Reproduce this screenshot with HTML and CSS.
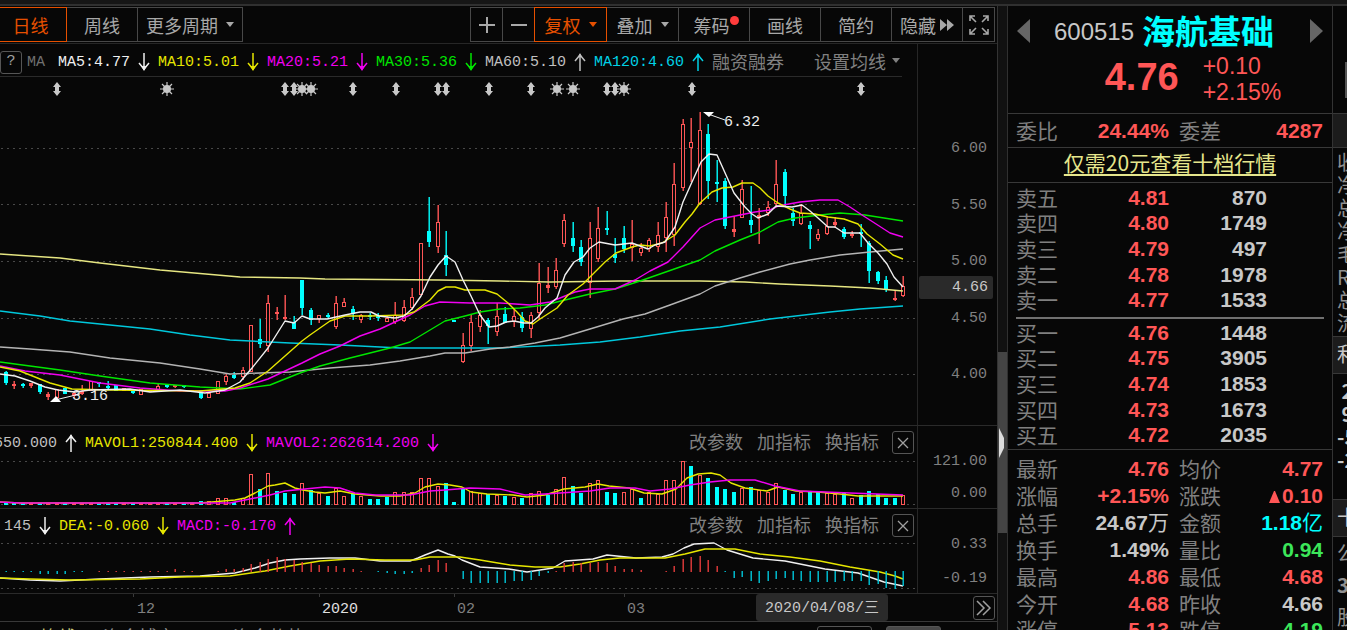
FILE: index.html
```html
<!DOCTYPE html>
<html lang="zh-CN">
<head>
<meta charset="utf-8">
<title>海航基础 600515</title>
<link rel="stylesheet" href="styles.css">
</head>
<body>
<svg class="defs" aria-hidden="true">
  <symbol id="down" viewBox="0 0 12 20"><path d="M6 1V18M1 11L6 17L11 11" fill="none" stroke="currentColor" stroke-width="1.5"/><path d="M3 14H9L6 19Z" fill="currentColor"/></symbol>
  <symbol id="up" viewBox="0 0 12 20"><path d="M6 19V2M1 9L6 3L11 9" fill="none" stroke="currentColor" stroke-width="1.5"/><path d="M4 5H8L6 1Z" fill="currentColor"/></symbol>
  <symbol id="caret" viewBox="0 0 8 5"><path d="M0 0H8L4 5Z" fill="currentColor"/></symbol>
  <symbol id="cross" viewBox="0 0 12 12"><path d="M1 1L11 11M11 1L1 11" stroke="currentColor" stroke-width="1.3"/></symbol>
</svg>
<div class="app">
  <div class="topstrip"></div>
  <main class="chart">
    <nav class="toolbar">
      <div class="group">
        <button class="btn day active">日线</button>
        <button class="btn">周线</button>
        <button class="btn wide">更多周期<svg class="caret"><use href="#caret"/></svg></button>
      </div>
      <div class="group">
        <button class="btn sign" aria-label="放大"><svg width="16" height="16"><path d="M0 8H16M8 0V16" stroke="currentColor" stroke-width="2"/></svg></button>
        <button class="btn sign" aria-label="缩小"><svg width="16" height="16"><path d="M0 8H16" stroke="currentColor" stroke-width="2"/></svg></button>
        <button class="btn drop active">复权<svg class="caret"><use href="#caret"/></svg></button>
        <button class="btn drop">叠加<svg class="caret"><use href="#caret"/></svg></button>
        <button class="btn">筹码<i class="dot"></i></button>
        <button class="btn">画线</button>
        <button class="btn">简约</button>
        <button class="btn tight">隐藏<svg width="14" height="12"><path d="M0 0L7 6L0 12ZM7 0L14 6L7 12Z" fill="currentColor"/></svg></button>
        <button class="btn sign" aria-label="全屏"><svg width="20" height="22" fill="none" stroke="currentColor" stroke-width="1.6"><path d="M1 7V2H6M1 2L7 8M14 2H19V7M19 2L13 8M1 15V20H6M1 20L7 14M14 20H19V15M19 20L13 14"/></svg></button>
      </div>
    </nav>

    <section class="pane price">
      <div class="plot">
        <div class="legend ruled">
          <button class="box" aria-label="帮助">?</button>
          <span class="dim name">MA</span>
          <span class="white">MA5:4.77</span><svg class="arrow white"><use href="#down"/></svg>
          <span class="yellow">MA10:5.01</span><svg class="arrow yellow"><use href="#down"/></svg>
          <span class="magenta">MA20:5.21</span><svg class="arrow magenta"><use href="#down"/></svg>
          <span class="green">MA30:5.36</span><svg class="arrow green"><use href="#down"/></svg>
          <span class="grey">MA60:5.10</span><svg class="arrow grey"><use href="#up"/></svg>
          <span class="cyan">MA120:4.60</span><svg class="arrow cyan"><use href="#up"/></svg>
          <button class="link">融资融券</button>
          <button class="link setting">设置均线<svg class="caret"><use href="#caret"/></svg></button>
        </div>
        <svg class="canvas" id="price" viewBox="0 77 917 348" preserveAspectRatio="xMaxYMid"></svg>
      </div>
      <div class="axis price-axis">
        <span>6.00</span><span>5.50</span><span>5.00</span><span>4.50</span><span>4.00</span>
        <b class="last">4.66</b>
      </div>
    </section>

    <section class="pane volume">
      <div class="plot">
        <div class="legend">
          <span class="grey cut">650.000</span><svg class="arrow white"><use href="#up"/></svg>
          <span class="yellow">MAVOL1:250844.400</span><svg class="arrow yellow"><use href="#down"/></svg>
          <span class="magenta">MAVOL2:262614.200</span><svg class="arrow magenta"><use href="#down"/></svg>
          <div class="tools"><button class="link">改参数</button><button class="link">加指标</button><button class="link">换指标</button><button class="box" aria-label="关闭"><svg width="12" height="12"><use href="#cross"/></svg></button></div>
        </div>
        <svg class="canvas" id="volume" viewBox="0 459 917 49" preserveAspectRatio="xMaxYMid"></svg>
      </div>
      <div class="axis sub-axis"><span>121.00</span><span>0.00</span></div>
    </section>

    <section class="pane macd">
      <div class="plot">
        <div class="legend">
          <span class="grey lead">145</span><svg class="arrow white"><use href="#down"/></svg>
          <span class="yellow">DEA:-0.060</span><svg class="arrow yellow"><use href="#down"/></svg>
          <span class="magenta">MACD:-0.170</span><svg class="arrow magenta"><use href="#up"/></svg>
          <div class="tools"><button class="link">改参数</button><button class="link">加指标</button><button class="link">换指标</button><button class="box" aria-label="关闭"><svg width="12" height="12"><use href="#cross"/></svg></button></div>
        </div>
        <svg class="canvas" id="macd" viewBox="0 542 917 51" preserveAspectRatio="xMaxYMid"></svg>
      </div>
      <div class="axis sub-axis"><span>0.33</span><span>-0.19</span></div>
    </section>

    <div class="dates">
      <svg class="canvas" viewBox="0 594 917 27" preserveAspectRatio="xMaxYMid">
        <path d="M133.5 593V597M319.5 593V597M454.5 593V597M624.5 593V597" stroke="#3a3a3a"/>
        <g class="date"><text x="137" y="613">12</text><text x="322" y="613" class="year">2020</text><text x="457" y="613">02</text><text x="627" y="613">03</text></g>
      </svg>
      <span class="cursor-date">2020/04/08/三</span>
      <button class="box more" aria-label="更多"><svg width="16" height="16" fill="none" stroke="currentColor" stroke-width="1.5"><path d="M1 1L8 8L1 15M7 1L14 8L7 15"/></svg></button>
    </div>

    <nav class="tabs">
      <button class="tab pale">云</button><button class="tab pale t2">均线</button><button class="tab t3">资金博弈</button><button class="tab t4">资金趋势</button><button class="tab pale t5">MACD</button><button class="tab t6">KDJ</button><button class="tab t7">RSI</button><button class="tab t8">BOLL</button><button class="tab t9">W&amp;R</button><button class="tab t10">OBV</button><button class="tab t11">BIAS</button><button class="tab framed">更多</button><button class="tab filled">模板</button>
    </nav>
  </main>

  <div class="splitter"><div class="thumb"><svg width="7" height="30"><path d="M1 0L6 10V20L1 30Z" fill="#ddd"/></svg></div></div>

  <aside class="quote">
    <header>
      <div class="title">
        <button class="step" aria-label="上一只"><svg width="13" height="24"><path d="M13 0V24L0 12Z" fill="#666"/></svg></button>
        <div class="stock"><span class="code">600515</span><h1>海航基础</h1></div>
        <button class="step" aria-label="下一只"><svg width="13" height="24"><path d="M0 0V24L13 12Z" fill="#666"/></svg></button>
      </div>
      <div class="now red"><strong>4.76</strong><div class="chg"><span>+0.10</span><span>+2.15%</span></div></div>
    </header>
    <table class="stats ratio"><tr><th>委比</th><td class="red">24.44%</td><th>委差</th><td class="red">4287</td></tr></table>
    <div class="promo"><a href="#">仅需20元查看十档行情</a></div>
    <div class="book">
      <table>
        <tr><th>卖五</th><td>4.81</td><td>870</td></tr>
        <tr><th>卖四</th><td>4.80</td><td>1749</td></tr>
        <tr><th>卖三</th><td>4.79</td><td>497</td></tr>
        <tr><th>卖二</th><td>4.78</td><td>1978</td></tr>
        <tr><th>卖一</th><td>4.77</td><td>1533</td></tr>
      </table>
      <hr>
      <table>
        <tr><th>买一</th><td>4.76</td><td>1448</td></tr>
        <tr><th>买二</th><td>4.75</td><td>3905</td></tr>
        <tr><th>买三</th><td>4.74</td><td>1853</td></tr>
        <tr><th>买四</th><td>4.73</td><td>1673</td></tr>
        <tr><th>买五</th><td>4.72</td><td>2035</td></tr>
      </table>
    </div>
    <table class="stats detail">
      <tr><th>最新</th><td class="red">4.76</td><th>均价</th><td class="red">4.77</td></tr>
      <tr><th>涨幅</th><td class="red">+2.15%</td><th>涨跌</th><td class="red"><svg width="11" height="12"><path d="M5 0H6L11 12H0Z" fill="currentColor"/></svg> 0.10</td></tr>
      <tr><th>总手</th><td>24.67<small>万</small></td><th>金额</th><td class="aqua">1.18<small>亿</small></td></tr>
      <tr><th>换手</th><td>1.49%</td><th>量比</th><td class="lime">0.94</td></tr>
      <tr><th>最高</th><td class="red">4.86</td><th>最低</th><td class="red">4.68</td></tr>
      <tr><th>今开</th><td class="red">4.68</td><th>昨收</th><td>4.66</td></tr>
      <tr><th>涨停</th><td class="red">5.13</td><th>跌停</th><td class="lime">4.19</td></tr>
    </table>
  </aside>

  <aside class="edge">
    <div class="edge-top"><i></i></div>
    <div class="edge-head first"></div>
    <div class="edge-list"><span>收</span><span>净</span><span>总</span><span>净</span><span>毛</span><span>R</span><span>总</span><span>流</span></div>
    <div class="edge-head">利</div>
    <div class="edge-nums"><span>&nbsp;2</span><span>&nbsp;9</span><span>-5</span><span>-2</span></div>
    <div class="edge-head">十</div>
    <div class="edge-foot"><span>公</span><b>3</b><span>股</span></div>
  </aside>
</div>
<script src="chart.js"></script>
</body>
</html>
```
FILE: styles.css
```css
* { box-sizing: border-box; }
html, body { margin: 0; height: 100%; overflow: hidden; background: #070707; }
body { color: #c8c8c8; font: 15px/20px "Liberation Mono", "Noto Sans CJK SC", monospace; }
button { background: none; border: 0; padding: 0; margin: 0; color: inherit; font: inherit; white-space: nowrap; cursor: pointer; }
svg { display: block; flex: none; }
.defs { position: absolute; width: 0; height: 0; }

.white { color: #f0f0f0; }
.grey { color: #c0c0c0; }
.dim { color: #707070; }
.yellow { color: #e6e600; }
.magenta { color: #f000f0; }
.green { color: #00e600; }
.cyan { color: #00d2e6; }
.red { color: #ff5656; }
.aqua { color: #00ffff; }
.lime { color: #3ce65a; }

.app { display: grid; grid-template-columns: minmax(0, 1fr) 10px 325px 14px; grid-template-rows: 6px minmax(0, 1fr); height: 100vh; overflow: hidden; }
.topstrip { grid-column: 1 / -1; background: #161616; border-bottom: 2px solid #303030; }
.chart { display: flex; flex-direction: column; min-width: 0; border-right: 1px solid #333; }

/* toolbar */
.toolbar { display: flex; flex: none; justify-content: space-between; height: 38px; padding: 1px 2px 2px 0; border-bottom: 1px solid #262626; }
.group { display: flex; height: 35px; }
.btn { display: flex; align-items: center; justify-content: center; gap: 8px; width: 72px; height: 35px; margin-left: -1px; border: 1px solid #484848; color: #a8a8a8; font: 18px/24px "Noto Sans CJK SC", sans-serif; }
.btn.day { width: 68px; padding-right: 5px; }
.btn.wide { width: 106px; }
.btn.sign { width: 33px; }
.btn.drop { width: 73px; }
.btn.tight { gap: 4px; }
.btn.active { position: relative; border-color: #e65000; color: #e65000; }
.caret { width: 8px; height: 5px; }
.dot { width: 9px; height: 9px; margin: 0 -4px 8px -8px; border-radius: 50%; background: #ff3c3c; }

/* panes */
.pane { display: grid; flex: none; grid-template-columns: minmax(0, 1fr) 80px; border-bottom: 1px solid #2a2a2a; }
.plot { display: flex; flex-direction: column; min-width: 0; }
.canvas { width: 100%; }
.legend { display: flex; flex: none; align-items: center; height: 33px; white-space: nowrap; }
.legend span { padding-top: 2px; }
.ruled { margin-right: 15px; padding-top: 4px; border-bottom: 1px solid #2a2a2a; }
.name { margin: 0 13px 0 5px; }
.arrow { width: 12px; height: 20px; margin: 0 8px; }
.cut { margin-left: -6px; }
.lead { margin-left: 4px; }
.link { display: flex; align-items: center; gap: 6px; padding-bottom: 3px; color: #808080; font: 18px/24px "Noto Sans CJK SC", sans-serif; }
.setting { margin-left: 30px; }
.tools { display: flex; align-items: center; gap: 14px; margin-left: auto; padding-right: 3px; }
.tools .box { margin-left: -1px; }
.box { display: flex; align-items: center; justify-content: center; width: 22px; height: 23px; border: 1px solid #555; border-radius: 3px; color: #a0a0a0; }
.axis { position: relative; display: flex; flex-direction: column; justify-content: space-between; padding-right: 10px; border-left: 1px solid #262626; color: #808080; text-align: right; }
.price-axis { padding-top: 95px; padding-bottom: 40px; }
.last { position: absolute; top: 232px; left: 1px; right: 4px; padding: 2px 5px 1px; border-radius: 2px; background: #2a2a2a; color: #c8c8c8; font-weight: normal; }
.volume { height: 83px; }
.macd { height: 85px; }
.sub-axis { padding-top: 26px; padding-bottom: 4px; }

.canvas text { font: 15px "Liberation Mono", monospace; fill: #eee; }
.date text { fill: #808080; }
.date .year { fill: #e0e0e0; }
.ma { fill: none; stroke-linejoin: round; }
.grid { stroke: #484848; stroke-dasharray: 2 4; shape-rendering: crispEdges; }

.dates { position: relative; display: grid; flex: none; grid-template-columns: minmax(0, 1fr) 80px; align-items: center; justify-items: end; height: 28px; border-bottom: 1px solid #383838; }
.cursor-date { position: absolute; top: 0; right: 109px; padding: 5px 9px 2px 9px; border-radius: 3px; background: #2a2a2a; color: #c8c8c8; white-space: nowrap; }
.more { height: 24px; margin-right: 2px; }

.tabs { display: flex; min-height: 0; height: 30px; padding-top: 2px; }
.tab { height: 24px; width: 70px; color: #909090; text-align: left; font: 18px/24px "Noto Sans CJK SC", sans-serif; }
.tab.pale { color: #c8c878; }
.tab:first-child { width: 40px; text-indent: -13px; }
.tab.t2 { width: 63px; }
.tab.t3, .tab.t4 { width: 130px; }
.tab.t5 { width: 82px; }
.tab.t6, .tab.t7, .tab.t9, .tab.t10, .tab.t11 { width: 60px; }
.tab.framed, .tab.filled { width: 55px; margin: 2px 14px 0 0; border: 1px solid #555; border-radius: 3px; text-align: center; line-height: 18px; }
.tab.framed { margin-left: auto; }
.tab.filled { margin-right: 56px; background: #484848; color: #ccc; }

/* splitter */
.splitter { padding-top: 346px; background: #111; border-right: 1px solid #303030; }
.thumb { display: flex; align-items: center; height: 181px; background: #444; }

/* quote */
.quote { display: flex; flex-direction: column; min-width: 0; border-right: 1px solid #333; color: #c8c8c8; }
.quote header { flex: none; height: 108px; padding: 7px 9px 0; border-bottom: 1px solid #383838; }
.title { display: flex; align-items: center; justify-content: space-between; height: 36px; }
.stock { display: flex; align-items: center; gap: 8px; padding: 0 12px 3px 0; }
.code { padding-top: 4px; font: 24px/32px "Liberation Sans", sans-serif; }
h1 { margin: 0; color: #00ffff; font: bold 33px/36px "Noto Sans CJK SC", sans-serif; }
.now { display: flex; justify-content: center; gap: 24px; padding: 4px 0 0 46px; }
.now strong { font: bold 38px/48px "Liberation Sans", sans-serif; }
.chg { display: flex; flex-direction: column; font: 23px/26px "Liberation Sans", sans-serif; }
.quote table { flex: none; width: 100%; border-collapse: collapse; table-layout: fixed; font: bold 21px/25px "Liberation Sans", sans-serif; }
.quote th, small { font: 21px/24px "Noto Sans CJK SC", sans-serif; }
.quote th { padding: 0 0 1px; color: #808080; text-align: left; }
.quote td { padding: 0; text-align: right; white-space: nowrap; }
.quote td svg { display: inline-block; margin-right: -4px; }
.stats { border-bottom: 1px solid #383838; }
.quote .stats th { width: 59px; padding-left: 8px; }
.quote .stats td + th { width: 61px; padding-left: 10px; }
.quote .stats td:last-child { padding-right: 9px; }
.stats tr { height: 27px; }
.quote .ratio tr { height: 33px; }
.promo { flex: none; height: 35px; border-bottom: 1px solid #383838; text-align: center; }
.promo a { color: #e6e68c; font: 21px/29px "Noto Sans CJK SC", sans-serif; text-underline-offset: 3px; }
.book { flex: none; padding: 2px 8px 1px; border-bottom: 1px solid #383838; }
.book table { height: 128px; }
.book th { width: 60px; }
.book td { width: 93px; color: #ff5656; }
.quote .book td:last-child { width: auto; padding-right: 57px; color: #c8c8c8; }
.book hr { height: 2px; margin: 4px 0 1px; border: 0; background: #707070; }
.detail { margin-top: 5px; }

/* clipped neighbouring panel */
.edge { display: flex; flex-direction: column; overflow: hidden; color: #909090; font: 20px/23px "Noto Sans CJK SC", sans-serif; }
.edge > div { flex: none; padding-left: 4px; border-bottom: 1px solid #383838; }
.edge span, .edge b { display: block; white-space: nowrap; }
.edge-top { display: flex; justify-content: flex-end; height: 108px; padding-top: 56px; }
.edge-top i { width: 2px; height: 36px; background: #555; }
.edge .edge-head { height: 37px; background: #1c1c1c; color: #c8c8c8; line-height: 34px; }
.edge .edge-head.first { height: 34px; }
.edge-list { height: 189px; padding-top: 2px; }
.edge-nums { height: 126px; padding-top: 5px; color: #c8c8c8; font-weight: bold; }
.edge-foot { line-height: 32px; }
```
FILE: chart.js
```js
const UP = '#ff5656', DOWN = '#00ffff';
const x = i => Math.round(6 + i * 8.462);

// colour, wick top, body top, body bottom, wick bottom
const candles = `d371,372,383,385 u381,384,386,389 d383,384,386,388 u383,383,386,388 d384,384,392,394 u392,394,397,400 u389,389,398,398 d388,388,394,394 u391,393,396,398 u385,391,394,395
u381,381,391,391 d382,382,384,387 d381,386,388,390 d385,385,391,391 u388,388,391,391 d391,391,393,394 u389,389,395,395 u390,390,392,392 u384,386,390,390 d385,385,387,388
u385,385,387,388 d385,385,387,388 u390,390,391,391 d390,390,398,399 u393,393,398,398 u381,381,394,394 u373,376,382,385 d372,375,378,379 u367,370,377,380 u325,325,372,372
d319,339,344,348 u295,303,346,352 u307,312,314,320 u295,317,319,320 d316,322,329,329 d280,280,308,315 d308,310,320,325 u315,315,319,323 d313,315,317,318 u296,303,327,329
u298,302,307,307 d306,309,314,320 u314,315,320,323 d313,315,317,320 d313,316,318,321 u316,318,322,322 u302,315,322,324 u300,307,321,322 u288,297,308,310 u243,243,295,295
d197,231,242,247 u205,222,247,253 d231,255,265,276 d320,320,322,322 u333,345,362,363 u315,322,346,351 u310,315,327,332 d318,320,326,344 u303,316,332,336 d307,314,323,323
u308,316,322,327 d312,317,328,332 u312,315,329,338 u263,283,313,320 u267,285,288,293 u258,270,287,289 u214,220,244,247 d222,238,246,252 d240,247,262,266 u222,238,283,298
u207,228,259,262 d211,228,230,235 d238,254,258,263 d226,238,249,253 u220,244,248,261 u243,248,253,256 u238,240,249,252 u222,235,247,252 u202,217,238,252 u163,184,235,246
u119,124,188,191 u118,142,148,182 u112,130,204,205 d124,134,181,199 d160,182,184,202 d178,181,226,229 u216,229,232,237 u180,189,218,218 d186,220,225,233 u208,215,218,244
u201,207,213,216 u160,184,204,206 d169,172,196,206 d208,213,221,226 u204,213,224,225 d221,225,229,249 u229,234,239,241 u217,226,234,235 u217,222,225,228 d227,229,237,239
u231,234,236,238 d224,232,234,247 d241,243,271,283 d271,272,281,284 d276,280,290,292 u290,298,300,301 u276,286,296,297`.split(/\s+/);

const box = (i, top, bottom, up) => up && bottom - top > 3
  ? `<rect x="${x(i) - 1.5}" y="${top + .5}" width="3" height="${bottom - top - 1}" fill="#070707" stroke="${UP}"/>`
  : `<rect x="${x(i) - 2}" y="${top}" width="4" height="${bottom - top}" fill="${up ? UP : DOWN}"/>`;
const line = (color, points) => `<polyline class="ma" stroke="${color}" stroke-width="1.4" points="${points}"/>`;
const grid = ys => ys.map(y => `<line class="grid" x1="1" x2="917" y1="${y + .5}" y2="${y + .5}"/>`).join('');
const put = (id, html) => { document.getElementById(id).innerHTML = html; };

const bodies = candles.map((c, i) => {
  const up = c[0] === 'u', [a, b, d, e] = c.slice(1).split(',').map(Number);
  return `<rect x="${x(i) - .5}" y="${a}" width="1.4" height="${e - a}" fill="${up ? UP : DOWN}"/>` + box(i, b, d, up);
}).join('');

const split = [57, 285, 294, 353, 396, 438, 446, 489, 531, 607, 615, 692, 861]
  .map(p => `<path d="M${p} 82L${p + 4} 87H${p + 2}V91H${p + 4}L${p} 96L${p - 4} 91H${p - 2}V87H${p - 4}Z"/>`).join('');
const stars = [167, 302, 311, 557, 573, 624]
  .map(p => `<circle cx="${p}" cy="89" r="4"/><path d="M${p - 7} 89H${p + 7}M${p} 82V96M${p - 5} 84L${p + 5} 94M${p + 5} 84L${p - 5} 94" stroke="#c8c8c8" stroke-width="1.2"/>`).join('');

put('price', grid([148, 204, 261, 318, 374]) + `<g fill="#c8c8c8">${split}${stars}</g>` + bodies
  + line('#e6e682', '0,254 60,258 100,263 160,270 240,277 300,278 325,279 440,280 500,281 550,282 620,281 700,281 745,282 780,284 830,286 870,288 903,291')
  + line('#00c8dc', '0,311 40,316 70,321 110,325 150,329 190,335 230,340 290,343 340,345 400,348 500,348 560,345 600,342 640,337 680,331 720,327 770,319 830,312 860,309 903,306')
  + line('#b4b4b4', '0,347 30,349 70,352 110,358 160,363 200,369 230,374 260,373 290,372 330,368 370,365 400,361 430,356 445,353 465,353 490,349 510,347 535,343 560,338 590,329 623,319 645,314 670,305 700,294 715,286 740,278 760,272 790,264 810,260 840,255 870,252 903,249')
  + line('#00e600', '0,362 30,366 60,370 100,376 150,383 200,387 240,389 270,385 300,373 320,366 350,358 370,353 390,348 410,342 430,330 445,321 465,316 480,312 500,309 520,308 545,305 565,300 590,294 615,289 640,281 660,274 680,267 700,260 715,251 740,240 760,232 778,222 795,218 820,215 840,213 865,215 903,221')
  + line('#f000f0', '0,366 25,371 60,375 100,383 140,388 180,391 225,391 240,388 268,379 285,371 302,363 320,354 340,346 360,336 380,329 395,322 410,315 425,306 440,302 470,303 500,303 530,305 550,302 575,292 590,289 615,289 635,280 650,271 668,262 683,247 700,228 715,220 735,216 755,212 770,210 778,206 800,202 820,200 838,200 850,207 862,215 873,222 890,233 903,237')
  + line('#e6e600', '0,367 20,371 50,383 72,389 110,390 200,391 235,388 250,383 268,371 285,356 302,341 310,335 320,328 330,321 345,316 370,316 404,315 414,312 430,300 438,291 446,287 455,287 465,290 485,290 497,294 508,303 517,312 525,321 533,324 540,319 557,308 568,295 583,284 591,276 605,262 616,253 632,247 640,245 650,246 662,243 675,235 685,222 692,214 700,203 712,192 722,188 733,187 742,183 753,183 760,188 768,196 778,203 790,209 800,213 815,214 828,217 844,219 858,224 867,234 880,244 893,255 903,259')
  + line('#f0f0f0', '0,374 15,376 30,381 45,387 58,390 75,392 90,390 130,389 150,392 180,390 205,393 225,390 240,382 252,368 268,348 285,321 294,323 302,316 310,319 327,319 345,315 360,312 371,312 379,316 395,318 404,316 412,309 421,296 430,277 438,265 446,256 455,262 463,280 471,296 480,315 489,327 497,326 506,322 514,321 524,323 531,323 538,317 545,308 557,298 565,275 574,262 583,257 590,248 599,242 615,245 632,243 640,246 648,249 655,245 665,242 675,227 683,202 692,182 701,162 709,154 717,155 726,175 734,193 745,207 752,214 758,218 768,214 776,206 792,207 802,205 810,211 818,218 828,227 835,227 844,233 860,233 868,243 878,253 887,264 894,277 903,287')
  + '<path d="M725 120L708 114M80 394L55 400" stroke="#eee"/><path d="M703 112H714L709 117ZM50 402L56 396L61 402Z" fill="#fff"/>'
  + '<text x="724" y="126">6.32</text><text x="72" y="400">3.16</text>');

// colour and bar height, one entry for each trading day
const volumes = `d2 d2 d2 u2 d2 u2 u2 d2 u2 u2 u2 d2 d2 d2 u2 d2 u2 u2 u2 d2 u2 d2 u2 d4 u4 u7 u7 d3 u7 u31 d16 u32 d14 d12 d11 u22 d15 u12 d9 u17 u9 d12 u9 d6 d6 d8 u13 u13 u13 u27 u27 u19 d22 d3
d17 u14 u12 d11 u10 d9 u8 d7 u12 u14 d10 u16 u28 d19 d12 u22 u25 d13 d12 u13 u16 d7 u13 u11 u25 u25 u44 d39 u30 d27 d18 d16 d13 u17 d18 u15 u13 u22 d15 d11 u13 d14 d13 u12 u11 d12 u7 d10 d14 d11 d7 d7 u10`.split(/\s+/);
put('volume', grid([461, 504]) + volumes.map((v, i) => box(i, 505 - +v.slice(1), 505, v[0] === 'u')).join('')
  + line('#e6e600', '0,502 20,503 200,503 235,500 245,498 255,493 268,486 275,485 285,483 295,488 303,490 315,492 325,493 340,491 355,494 380,496 400,496 415,493 425,487 438,484 450,485 462,487 471,492 487,494 513,495 527,497 545,495 564,489 585,487 598,484 609,486 629,488 644,493 662,494 676,489 687,478 698,474 711,473 720,475 731,483 745,488 767,491 778,487 796,491 818,492 840,494 858,496 903,496')
  + line('#f000f0', '0,502 20,503 230,503 250,499 270,495 285,491 305,489 325,487 340,488 355,493 375,495 410,495 430,491 445,490 470,488 500,489 525,495 545,494 590,491 610,488 635,488 650,491 670,489 690,485 710,482 730,480 755,480 775,486 800,491 850,493 903,495'));

const macd = [-1,-1,-1,-1,-3,-3,-3,-3,-1,-1,0,1,1,1,1,1,1,1,1,1,3,1,1,0,0,1,3,3,4,8,10,13,15,13,12,10,9,7,6,6,4,3,1,0,-1,-2,-3,-3,-2,4,7,12,9,0,
  -8,-12,-12,-12,-12,-12,-10,-10,-9,-5,-2,1,9,10,9,9,10,9,6,3,3,2,0,0,1,6,13,15,16,12,6,-1,-7,-6,-10,-12,-10,-8,-7,-9,-10,-11,-11,-11,-11,-10,-10,-10,-14,-13,-17,-18,-15];
put('macd', grid([543, 588])
  + line('#f0f0f0', '0,578 30,580 60,581 100,579 150,577 200,576 235,573 255,568 270,563 285,560 300,559 330,558 355,558 380,561 410,561 418,558 425,555 438,550 448,554 455,556 462,560 480,567 509,569 527,572 553,568 565,561 593,559 607,555 636,558 662,557 673,554 684,548 694,544 714,543 727,550 753,558 785,561 825,569 858,573 884,582 903,586')
  + line('#e6e600', '0,578 30,579 70,580 140,579 180,577 230,576 265,571 290,566 320,561 350,559 385,560 415,560 430,557 460,557 480,560 510,565 535,567 560,567 580,564 600,560 620,558 665,558 685,554 705,549 735,549 760,554 790,557 820,561 850,567 880,572 895,576 903,579')
  + macd.map((v, i) => `<rect x="${x(i) - .5}" y="${v > 0 ? 572 - v : 571}" width="1.4" height="${Math.abs(v)}" fill="${v > 0 ? '#e63c3c' : '#00c8dc'}"/>`).join(''));
```
